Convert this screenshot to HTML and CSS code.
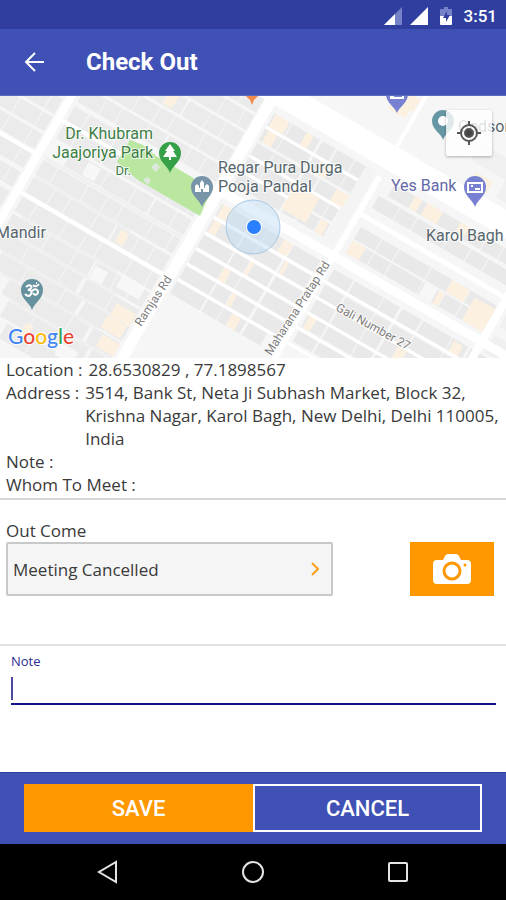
FILE: index.html
```html
<!DOCTYPE html>
<html lang="en">
<head>
    <meta charset="UTF-8">
    <meta name="viewport" content="width=device-width, initial-scale=1.0">
    <title>Check Out</title>
    <link rel="stylesheet" href="styles.css">
</head>
<body>
    <div class="status-bar">
        <svg width="18" height="18" viewBox="0 0 18 18"><path d="M18 0V18H0z" fill="#7682c8"/><path d="M11 7V18H0z" fill="#fff"/></svg>
        <svg width="18" height="18" viewBox="0 0 18 18"><path d="M18 0V18H0z" fill="#fff"/></svg>
        <svg class="battery" width="12" height="18" viewBox="0 0 12 18">
            <path d="M4 0h4v2h3q1 0 1 1v7H0V3q0-1 1-1h3z" fill="#7682c8"/>
            <path d="M0 9h12v8q0 1-1 1H1q-1 0-1-1z" fill="#fff"/>
            <path d="M7 4L3 11h3v4l4-7H7z" fill="#303f9f"/>
        </svg>
        <span>3:51</span>
    </div>

    <header class="app-bar">
        <button class="back" aria-label="Back">
            <svg width="20" height="20" viewBox="0 0 20 20" fill="none" stroke="#fff" stroke-width="2"><path d="M20 10H2M11 1L2 10l9 9"/></svg>
        </button>
        <h1>Check Out</h1>
    </header>

    <div class="map">
        <svg class="map-canvas" viewBox="0 0 506 262" preserveAspectRatio="xMidYMid slice">
            <rect width="506" height="262" fill="#f6f6f6"/>

            <!-- street grid, turned 30 degrees -->
            <g transform="rotate(30)" fill="none">
                <!-- buildings -->
                <g stroke="#ebebeb" stroke-width="17">
                    <path d="M0-20H56M0 0H56M0 20H56M0 42H56M0 64H56M0 86H56" stroke-dasharray="18 1 25 1"/>
                    <path d="M70-122H230M70-82H230M70-42H230M90 20H228M70 62H228M70 104H228" stroke-dasharray="24 1 17 1 31 1 20 2"/>
                    <path d="M70-102H230M70-62H230M70-20H140M70 0H228M70 42H228M70 84H228" stroke-dasharray="16 1 34 1 22 1"/>
                    <path d="M70 124H228M80 143H228M100 162H228M110 182H228M120 202H228" stroke-dasharray="30 1 42 1 19 4"/>
                </g>
                <path d="M70 31H228M70 52H180M80 94H190M70 114H200M80 134H228M90 153H200M110 172H228" stroke="#f0f0f0" stroke-width="3"/>
                <g stroke="#e9e9e9" stroke-width="14">
                    <path d="M246-115H362M246-98H362M246-81H362M246-64H350M246-47H350" stroke-dasharray="20 1 32 3 15 2"/>
                    <path d="M246-11H360M246 7H360M246 25H360M246 43H360M246 61H360M246 79H350" stroke-dasharray="34 2 17 1 26 3"/>
                    <path d="M386-114H540M378-96H540M378-60H535M378-44H535" stroke-dasharray="24 1 19 1 36 1"/>
                    <path d="M376-10H560M376 8H560M376 25H500M376 42H480M376 59H450" stroke-dasharray="22 2 33 1 18 3"/>
                </g>
                <g stroke="#f0f0f0" stroke-width="20">
                    <path d="M480-170H540M548-96H600M548-60H600M548-30H600M440-190H500"/>
                </g>

                <!-- shops -->
                <g stroke="#fcf1e1" stroke-width="14">
                    <path d="M145-82h10M172 62h9M205 128h22M203 143h22M208 162h20M136 190h8"/>
                    <path d="M248-115h16M284-115h8M250-98h10M248-11h12M248 7h8M310-98h12M338-81h16"/>
                    <path d="M300 25h4M330 7h4M280 43h8M300 61h5M300-64h28M300-50h28M318-11h10M340-47h8"/>
                    <path d="M378-44h15M410-114h8M424-114h18M462-114h10M484-60h20M478-44h6M512-44h24M512-56h24"/>
                    <path d="M342-200h24M342-190h20M450-165h20M516-8h10M470 25h10M310 79h10M378 42h8"/>
                </g>
                <path d="M176 190h20M168 106h14M462-44h14M110 20h14M196 100h26" stroke="#f7f7f7" stroke-width="14"/>

                <!-- roads -->
                <g stroke="#fff">
                    <path d="M62-80V200" stroke-width="8"/>
                    <path d="M237-142V240" stroke-width="11"/>
                    <path d="M369-120V120" stroke-width="6"/>
                    <path d="M369-253V-142" stroke-width="4"/>
                    <path d="M540-120V40" stroke-width="8"/>
                    <path d="M160-142H600" stroke-width="25"/>
                    <path d="M237-28H600" stroke-width="9"/>
                    <path d="M369-78H600" stroke-width="5"/>
                    <path d="M66-10H237M66 73H237M0 32H60" stroke-width="4"/>
                    <path d="M246-106H362M246-73H350M246-56H300M246-2H560M246 16H560M246 34H480M246 52H480M246 70H480" stroke-width="3"/>
                </g>
                <path d="M358-122V-36" stroke="#f4f4f4" stroke-width="12"/>
            </g>

            <!-- park -->
            <path d="M130 44L143 49 156 60 212 93 200 120 138 84 117 66z" fill="#b9e7a0"/>
            <path d="M151 71l5-4 4 4-4 5zM143 84l4-3 4 3-3 5z" fill="#dfe8dc"/>

            <!-- current position -->
            <circle cx="253" cy="131" r="27" fill="#b4d8f4" fill-opacity=".42" stroke="#a8c8e4"/>
            <circle cx="254" cy="131" r="8" fill="#fff"/>
            <circle cx="254" cy="131" r="7" fill="#2a7fff"/>

            <!-- pins -->
            <g transform="translate(170 57)">
                <path d="M0 20C-2 13-11 9-11 0a11 11 0 0 1 22 0C11 9 2 13 0 20z" fill="#35a048"/>
                <path d="M0-9l5 7H3l4 6H1v3h-2V4h-6l4-6h-2z" fill="#fff"/>
            </g>
            <g transform="translate(202 91)">
                <path d="M0 20C-2 13-11 9-11 0a11 11 0 0 1 22 0C11 9 2 13 0 20z" fill="#7794a8"/>
                <path d="M-7 5V-1l2-2 2 2v2h1v-5l2-3 2 3v5h1v-2l2-2 2 2v6H1V2h-2v3z" fill="#fff"/>
            </g>
            <g transform="translate(32 194)">
                <path d="M0 20C-2 13-11 9-11 0a11 11 0 0 1 22 0C11 9 2 13 0 20z" fill="#66919e"/>
                <path d="M-6-3q3-3 5-1t-3 4q5 0 3 4t-6 0M0 1q3-3 5-1t0 4-4-1M1-5q3 3 6-1M4-7h1" fill="none" stroke="#fff" stroke-width="2"/>
            </g>
            <g transform="translate(443 25)">
                <path d="M0 19C-2 12-11 9-11 0a11 11 0 0 1 22 0C11 9 2 12 0 19z" fill="#6797a4"/>
                <circle r="5" fill="#fff"/>
            </g>
            <g transform="translate(475 91)">
                <path d="M0 20C-2 13-11 9-11 0a11 11 0 0 1 22 0C11 9 2 13 0 20z" fill="#7880d2"/>
                <rect x="-7" y="-4" width="14" height="9" fill="none" stroke="#fff" stroke-width="2"/>
                <path d="M-4-1h2M0 2h5" stroke="#fff" stroke-width="2"/>
            </g>
            <g transform="translate(397 -2)">
                <path d="M0 19C-2 13-11 9-11 0a11 11 0 0 1 22 0C11 9 2 13 0 19z" fill="#7880d2"/>
                <rect x="-7" y="-4" width="14" height="9" fill="#fff"/>
                <path d="M-3 2H5" stroke="#7880d2" stroke-width="2"/>
            </g>
            <path d="M246 0h12l-4 4-2 5-2-5z" fill="#f08a4b"/>

            <g class="place">
                <text class="green" x="153" y="43" text-anchor="end">Dr. Khubram</text>
                <text class="green" x="153" y="62" text-anchor="end">Jaajoriya Park</text>
                <text class="green small" x="131" y="79" text-anchor="end">Dr.</text>
                <text x="218" y="77">Regar Pura Durga</text>
                <text x="218" y="96">Pooja Pandal</text>
                <text x="-4" y="142">Mandir</text>
                <text x="426" y="145">Karol Bagh</text>
                <text x="458" y="36">Godson</text>
                <text class="violet" x="391" y="95">Yes Bank</text>
            </g>
            <g class="street">
                <text transform="translate(141 231) rotate(-57)">Ramjas Rd</text>
                <text transform="translate(271 260) rotate(-57)">Maharana Pratap Rd</text>
                <text transform="translate(335 214) rotate(29)">Gali Number 27</text>
            </g>
            <text class="logo" x="8" y="248"><tspan class="g-blue">G</tspan><tspan class="g-red">o</tspan><tspan class="g-yellow">o</tspan><tspan class="g-blue">g</tspan><tspan class="g-green">l</tspan><tspan class="g-red">e</tspan></text>
        </svg>
        <button class="locate" aria-label="My location">
            <svg width="24" height="24" viewBox="0 0 24 24" fill="none" stroke="#555" stroke-width="2"><circle cx="12" cy="12" r="8"/><circle cx="12" cy="12" r="4" fill="#444"/><path d="M12 0v4M12 20v4M0 12h4M20 12h4"/></svg>
        </button>
    </div>

    <main>
        <dl class="details">
            <div><dt>Location :</dt><dd>28.6530829 , 77.1898567</dd></div>
            <div><dt>Address :</dt><dd>3514, Bank St, Neta Ji Subhash Market, Block 32, Krishna Nagar, Karol Bagh, New Delhi, Delhi 110005, India</dd></div>
            <div><dt>Note :</dt><dd></dd></div>
            <div><dt>Whom To Meet :</dt><dd></dd></div>
        </dl>

        <section class="outcome">
            <div class="outcome-field">
                <label for="outcome">Out Come</label>
                <div class="select-box">
                    <select id="outcome">
                        <option>Meeting Cancelled</option>
                    </select>
                    <svg class="chevron" width="8" height="14" viewBox="0 0 8 14" fill="none" stroke="#f9a01b" stroke-width="2"><path d="M1 1l6 6-6 6"/></svg>
                </div>
            </div>
            <button class="camera" aria-label="Take photo">
                <svg width="38" height="30" viewBox="0 0 38 30">
                    <path d="M4 6h6l2-4q1-2 3-2h8q2 0 3 2l2 4h6q4 0 4 4v16q0 4-4 4H4q-4 0-4-4V10q0-4 4-4z" fill="#fff"/>
                    <circle cx="19" cy="17" r="8" fill="#fff" stroke="#ff9800" stroke-width="3"/>
                    <circle cx="32" cy="11" r="1.5" fill="#ff9800"/>
                </svg>
            </button>
        </section>

        <section class="note">
            <label for="note">Note</label>
            <div class="note-box">
                <input id="note" type="text">
            </div>
        </section>
    </main>

    <footer class="actions">
        <button class="save">SAVE</button>
        <button class="cancel">CANCEL</button>
    </footer>

    <nav class="nav-bar">
        <button aria-label="Back"><svg width="24" height="24" viewBox="0 0 24 24"><path d="M20 2v20L3 12z"/></svg></button>
        <button aria-label="Home"><svg width="24" height="24" viewBox="0 0 24 24"><circle cx="12" cy="12" r="10"/></svg></button>
        <button aria-label="Recent apps"><svg width="24" height="24" viewBox="0 0 24 24"><rect x="3" y="3" width="18" height="18" rx="1"/></svg></button>
    </nav>
</body>
</html>
```

FILE: styles.css
```css
* {
    box-sizing: border-box;
}
body {
    margin: 0;
    min-height: 100vh;
    display: flex;
    flex-direction: column;
    background: #fff;
    color: #3a3a3a;
    font-family: 'Open Sans', 'Noto Sans', sans-serif;
    font-size: 17px;
    line-height: 23px;
}
button {
    padding: 0;
    border: none;
    background: none;
    cursor: pointer;
}
svg {
    display: block;
}

.status-bar {
    height: 29px;
    padding: 2px 9px 0 0;
    display: flex;
    align-items: center;
    justify-content: flex-end;
    gap: 8px;
    background: #303f9f;
    color: #fff;
    font: 500 17px Roboto, sans-serif;
}
.battery {
    margin: 0 4px;
}
.app-bar {
    height: 67px;
    padding: 0 24px;
    display: flex;
    align-items: center;
    gap: 42px;
    background: #3f51b5;
    border-bottom: 1px solid #5c6bc0;
}
.app-bar h1 {
    margin: 0;
    color: #fff;
    font: 700 24px Roboto, sans-serif;
}

.map {
    position: relative;
    aspect-ratio: 506 / 262;
}
.map-canvas {
    width: 100%;
    height: 100%;
}
.map text {
    font-family: Roboto, sans-serif;
    paint-order: stroke;
    stroke: #fff;
    stroke-width: 2px;
    stroke-opacity: 0.8;
}
.place {
    font-size: 16px;
    fill: #56666c;
}
.place .green {
    fill: #3d7f45;
}
.place .violet {
    fill: #6468a8;
}
.place .small {
    font-size: 13px;
}
.street {
    font-size: 12px;
    fill: #7c7c7c;
}
.map .logo {
    font: 500 21px Lato, sans-serif;
}
.g-blue { fill: #4285f4; }
.g-red { fill: #ea4335; }
.g-yellow { fill: #fbbc05; }
.g-green { fill: #34a853; }
.locate {
    position: absolute;
    top: 14px;
    right: 14px;
    width: 46px;
    height: 46px;
    display: grid;
    place-items: center;
    background: rgba(255, 255, 255, 0.8);
    border-radius: 2px;
    box-shadow: 0 1px 3px rgba(0, 0, 0, 0.3);
}

main {
    flex: 1;
}
.details {
    margin: 0;
    padding: 0 4px 2px 6px;
    border-bottom: 2px solid #d6d6d6;
}
.details div {
    display: flex;
    gap: 6px;
}
.details dt {
    flex: none;
}
.details dd {
    margin: 0;
}

.outcome {
    padding: 19px 12px 48px 6px;
    display: flex;
    justify-content: space-between;
    align-items: flex-end;
    border-bottom: 2px solid #e4e4e4;
}
.outcome-field {
    width: 67%;
}
.outcome-field label {
    display: block;
}
.select-box {
    position: relative;
}
.select-box select {
    display: block;
    width: 100%;
    height: 54px;
    padding: 0 5px;
    appearance: none;
    border: 2px solid #c8c8c8;
    border-radius: 2px;
    background: #f5f5f5;
    color: inherit;
    font: inherit;
}
.chevron {
    position: absolute;
    right: 14px;
    top: 20px;
}
.camera {
    width: 84px;
    height: 54px;
    display: grid;
    place-items: center;
    background: #ff9800;
}

.note {
    padding: 4px 10px 0 11px;
}
.note label {
    display: block;
    color: #2c2c96;
    font-size: 13px;
    line-height: 22px;
}
.note-box {
    position: relative;
}
.note-box::before {
    content: '';
    position: absolute;
    left: 0;
    top: 5px;
    width: 2px;
    height: 23px;
    background: #4a4aa0;
}
.note input {
    display: block;
    width: 100%;
    height: 33px;
    padding: 0 4px;
    border: none;
    border-bottom: 2px solid #10108c;
    outline: none;
    background: none;
    font: inherit;
    caret-color: transparent;
}

.actions {
    padding: 11px 24px 12px;
    display: grid;
    grid-template-columns: 1fr 1fr;
    background: #3f51b5;
    border-top: 1px solid #303f9f;
}
.actions button {
    height: 48px;
    color: #fff;
    font: 500 22px Roboto, sans-serif;
}
.actions .save {
    background: #ff9800;
}
.actions .cancel {
    border: 2px solid #fff;
}

.nav-bar {
    height: 56px;
    padding: 0 36px;
    display: flex;
    background: #000;
}
.nav-bar button {
    flex: 1;
    display: grid;
    place-items: center;
}
.nav-bar svg {
    fill: none;
    stroke: #e4e4e4;
    stroke-width: 2;
}
```
